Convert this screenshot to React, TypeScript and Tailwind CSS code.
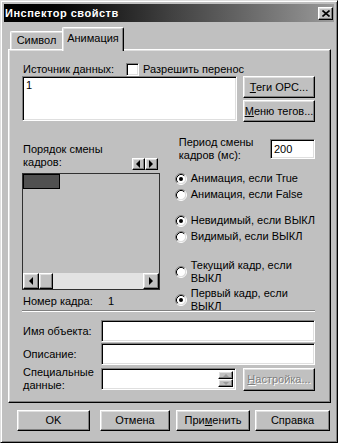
import React from "react";

const raised =
  "bg-[#c0c0c0] border border-t-white border-l-white border-r-black border-b-black shadow-[inset_-1px_-1px_0_#808080,inset_1px_1px_0_#dfdfdf]";
const sunken =
  "bg-white border border-t-[#808080] border-l-[#808080] border-r-white border-b-white shadow-[inset_1px_1px_0_#000,inset_-1px_-1px_0_#dfdfdf]";

const Radio = ({ checked }: { checked?: boolean }) => (
  <svg width="12" height="12" viewBox="0 0 12 12" className="shrink-0">
    <circle cx="6" cy="6" r="4.5" fill="#fff" />
    <path d="M2.11 9.89 A5.5 5.5 0 0 1 9.89 2.11" fill="none" stroke="#808080" />
    <path d="M9.89 2.11 A5.5 5.5 0 0 1 2.11 9.89" fill="none" stroke="#fff" />
    <path d="M2.82 9.18 A4.5 4.5 0 0 1 9.18 2.82" fill="none" stroke="#000" />
    <path d="M9.18 2.82 A4.5 4.5 0 0 1 2.82 9.18" fill="none" stroke="#dfdfdf" />
    {checked && <circle cx="6" cy="6" r="2" fill="#000" />}
  </svg>
);

const RadioRow = ({
  checked,
  className,
  children,
}: {
  checked?: boolean;
  className: string;
  children: React.ReactNode;
}) => (
  <div className={`flex items-center gap-[4px] whitespace-nowrap ${className}`}>
    <Radio checked={checked} />
    <span>{children}</span>
  </div>
);

const Arrow = ({ dir, color = "#000" }: { dir: "l" | "r" | "u" | "d"; color?: string }) => {
  const pts = {
    l: "4,0 4,8 0,4",
    r: "0,0 0,8 4,4",
    u: "0,3 6,3 3,0",
    d: "0,0 6,0 3,3",
  }[dir];
  const w = dir === "l" || dir === "r" ? 4 : 6;
  const h = dir === "l" || dir === "r" ? 8 : 3;
  return (
    <svg width={w} height={h} viewBox={`0 0 ${w} ${h}`}>
      <polygon points={pts} fill={color} />
    </svg>
  );
};

export default function App() {
  return (
    <div className="w-[338px] h-[443px] bg-[#c0c0c0] border border-t-[#dfdfdf] border-l-[#dfdfdf] border-r-black border-b-black shadow-[inset_1px_1px_0_#fff,inset_-1px_-1px_0_#808080] p-[3px] flex flex-col font-['Liberation_Sans',Arial,sans-serif] text-[11px] leading-[13px] text-black overflow-hidden">
      {/* title bar */}
      <div className="h-[18px] shrink-0 flex items-center justify-between bg-linear-to-r from-black via-[#404040] to-[#9a9a9a] pl-[1px] pr-[1px]">
        <span className="text-white font-bold text-[11px] tracking-[0.5px]">Инспектор свойств</span>
        <div className={`w-[15px] h-[13px] flex items-center justify-center ${raised}`}>
          <svg width="8" height="7" viewBox="0 0 8 7">
            <path d="M0.5 0.5 L7.5 6.5 M7.5 0.5 L0.5 6.5" stroke="#000" strokeWidth="1.6" />
          </svg>
        </div>
      </div>

      {/* tabs */}
      <div className="mt-[5px] h-[22px] shrink-0 flex items-end pl-[6px]">
        <div className="w-[52px] h-[18px] flex items-center justify-center border-t border-l border-t-white border-l-white shadow-[inset_1px_1px_0_#dfdfdf] rounded-tl-[2px]">
          Символ
        </div>
        <div className="w-[62px] h-[24px] -mb-[2px] relative z-10 bg-[#c0c0c0] flex justify-center pt-[4px] border-t border-l border-r border-t-white border-l-white border-r-black shadow-[inset_-1px_0_0_#808080,inset_1px_1px_0_#dfdfdf] rounded-t-[2px]">
          Анимация
        </div>
      </div>

      {/* panel */}
      <div className="ml-[4px] mr-[3px] h-[354px] shrink-0 border border-t-white border-l-white border-r-black border-b-black shadow-[inset_-1px_-1px_0_#808080,inset_1px_1px_0_#dfdfdf] pl-[13px] pr-[15px] pt-[13px] flex flex-col">
        <div className="h-[13px] flex items-center">
          <span className="w-[104px] pl-[1px]">Источник данных:</span>
          <div className={`w-[13px] h-[13px] ${sunken}`} />
          <span className="ml-[4px]">Разрешить перенос</span>
        </div>

        <div className="flex">
          <div className={`w-[216px] h-[45px] pl-[3px] pt-[2px] ${sunken}`}>1</div>
          <div className="ml-[6px] flex flex-col gap-[2px]">
            <div className={`w-[72px] h-[22px] flex items-center justify-center ${raised}`}>
              <span>
                <u className="underline-offset-[1px]">Т</u>еги OPC...
              </span>
            </div>
            <div className={`w-[72px] h-[22px] flex items-center justify-center ${raised}`}>
              <span>
                <u className="underline-offset-[1px]">М</u>еню тегов...
              </span>
            </div>
          </div>
        </div>

        {/* middle */}
        <div className="flex h-[188px]">
          <div className="w-[140px] pt-[21px] flex flex-col">
            <div className="flex items-end justify-between">
              <div className="pl-[1px]">
                Порядок смены
                <br />
                кадров:
              </div>
              <div className="flex mr-[2px] -mb-[1px]">
                <div className={`w-[13px] h-[12px] flex items-center justify-center ${raised}`}>
                  <Arrow dir="l" />
                </div>
                <div className={`w-[13px] h-[12px] flex items-center justify-center ${raised}`}>
                  <Arrow dir="r" />
                </div>
              </div>
            </div>
            <div className="mt-[4px] h-[117px] border border-[#303030] flex flex-col justify-between">
              <div className="w-[37px] h-[15px] bg-[#505050] border border-black" />
              <div className="h-[16px] flex">
                <div className={`w-[16px] h-[16px] flex items-center justify-center ${raised}`}>
                  <Arrow dir="l" />
                </div>
                <div className={`w-[14px] h-[16px] ${raised}`} />
                <div className="flex-1 bg-[#e2e2e2]" />
                <div className={`w-[16px] h-[16px] flex items-center justify-center ${raised}`}>
                  <Arrow dir="r" />
                </div>
              </div>
            </div>
            <div className="mt-[5px] flex">
              <span className="w-[86px] pl-[1px]">Номер кадра:</span>
              <span>1</span>
            </div>
          </div>

          <div className="ml-[15px] flex-1 pt-[14px] flex flex-col">
            <div className="flex items-center justify-between">
              <div className="pl-[4px]">
                Период смены
                <br />
                кадров (мс):
              </div>
              <div className={`w-[45px] h-[20px] pl-[3px] flex items-center ${sunken}`}>200</div>
            </div>
            <RadioRow checked className="mt-[10px]">
              Анимация, если True
            </RadioRow>
            <RadioRow className="mt-[3px]">Анимация, если False</RadioRow>
            <RadioRow checked className="mt-[13px]">
              Невидимый, если ВЫКЛ
            </RadioRow>
            <RadioRow className="mt-[3px]">Видимый, если ВЫКЛ</RadioRow>
            <RadioRow className="mt-[16px]">
              Текущий кадр, если
              <br />
              ВЫКЛ
            </RadioRow>
            <RadioRow checked className="mt-[2px]">
              Первый кадр, если
              <br />
              ВЫКЛ
            </RadioRow>
          </div>
        </div>

        <div className="h-[2px] border-t border-t-[#808080] border-b border-b-white" />

        <div className="mt-[8px] flex items-center">
          <span className="w-[79px] pl-[1px]">Имя объекта:</span>
          <div className={`flex-1 h-[22px] ${sunken}`} />
        </div>
        <div className="mt-[1px] flex items-center">
          <span className="w-[79px] pl-[1px]">Описание:</span>
          <div className={`flex-1 h-[22px] ${sunken}`} />
        </div>
        <div className="mt-[1px] flex items-center">
          <span className="w-[79px] pl-[1px]">
            Специальные
            <br />
            данные:
          </span>
          <div className={`w-[135px] h-[22px] flex justify-end p-[2px] ${sunken}`}>
            <div className="w-[15px] flex flex-col">
              <div className={`flex-1 flex items-center justify-center ${raised}`}>
                <Arrow dir="u" color="#9a9a9a" />
              </div>
              <div className={`flex-1 flex items-center justify-center ${raised}`}>
                <Arrow dir="d" color="#9a9a9a" />
              </div>
            </div>
          </div>
          <div className={`ml-[7px] w-[72px] h-[23px] flex items-center justify-center text-[#808080] [text-shadow:1px_1px_0_#fff] ${raised}`}>
            <span>
              <u className="underline-offset-[1px]">Н</u>астройка...
            </span>
          </div>
        </div>
      </div>

      {/* bottom buttons */}
      <div className="mt-[7px] flex pl-[13px]">
        <div className={`w-[73px] h-[21px] flex items-center justify-center ${raised}`}>OK</div>
        <div className={`ml-[10px] w-[70px] h-[21px] flex items-center justify-center ${raised}`}>Отмена</div>
        <div className={`ml-[6px] w-[74px] h-[21px] flex items-center justify-center ${raised}`}>
          <span>
            При<u className="underline-offset-[1px]">м</u>енить
          </span>
        </div>
        <div className={`ml-[5px] w-[75px] h-[21px] flex items-center justify-center ${raised}`}>Справка</div>
      </div>
    </div>
  );
}
